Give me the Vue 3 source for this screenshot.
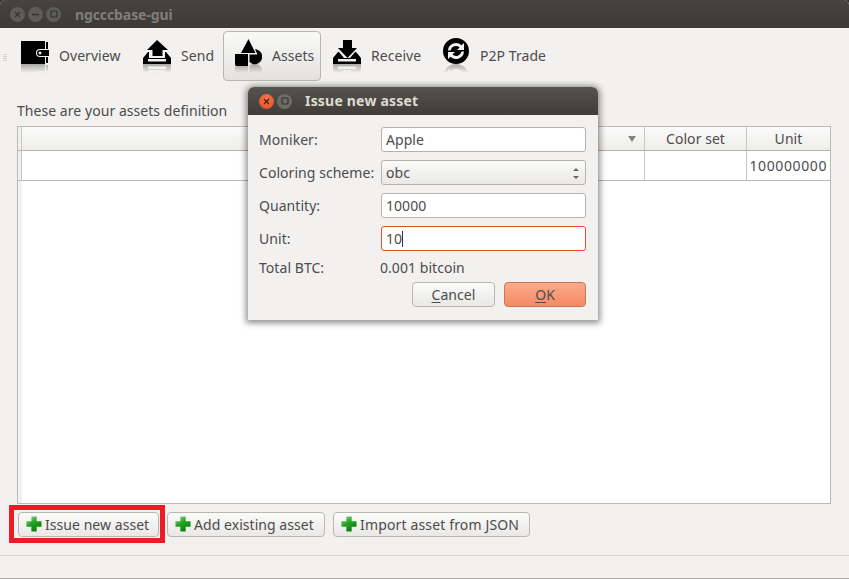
<template>
  <div class="window">
    <div class="titlebar">
      <span class="dot"><svg width="7" height="7" viewBox="0 0 7 7"><path d="M1 1l5 5M6 1L1 6" stroke="#35342f" stroke-width="1.2" /></svg></span>
      <span class="dot"><svg width="7" height="7" viewBox="0 0 7 7"><path d="M0 3.5h7" stroke="#35342f" stroke-width="1.4" /></svg></span>
      <span class="dot"><svg width="8" height="8" viewBox="0 0 8 8"><rect x="1" y="1" width="6" height="6" rx="1" fill="none" stroke="#35342f" stroke-width="1.2" /></svg></span>
      <span class="app-title">ngcccbase-gui</span>
    </div>

    <div class="toolbar">
      <div class="grip"><i></i><i></i><i></i><i></i></div>
      <div
        v-for="tool in tools"
        :key="tool.id"
        class="tool"
        :class="{ active: tool.active }"
        :style="{ width: tool.width + 'px' }"
      >
        <svg class="tool-icon" width="28" height="36" viewBox="0 0 28 36">
          <defs>
            <linearGradient :id="'fade-' + tool.id" x1="0" y1="0" x2="0" y2="1">
              <stop offset="0" stop-color="#fff" stop-opacity="0.3" />
              <stop offset="1" stop-color="#fff" stop-opacity="0" />
            </linearGradient>
            <mask :id="'mask-' + tool.id" maskUnits="userSpaceOnUse" x="0" y="26" width="28" height="10">
              <rect x="0" y="26" width="28" height="9" :fill="'url(#fade-' + tool.id + ')'" />
            </mask>
          </defs>
          <g :mask="'url(#mask-' + tool.id + ')'">
            <path :d="tool.icon" fill-rule="evenodd" transform="matrix(1 0 0 -1 0 52)" />
          </g>
          <path :d="tool.icon" fill-rule="evenodd" />
        </svg>
        <span class="tool-label">{{ tool.label }}</span>
      </div>
    </div>

    <div class="content">
      <div class="caption">These are your assets definition</div>
      <div class="table">
        <div class="th corner"></div>
        <div class="th name"><span class="sort"></span></div>
        <div class="th">Color set</div>
        <div class="th last">Unit</div>
        <div class="td corner"></div>
        <div class="td"></div>
        <div class="td"></div>
        <div class="td last num">100000000</div>
        <div class="corner filler"></div>
        <div class="blank"></div>
      </div>
      <div class="actions">
        <div class="highlight">
          <button class="btn"><svg class="plus" width="16" height="16" viewBox="0 0 18 18"><use href="#plus-shape" /></svg>Issue new asset</button>
        </div>
        <button class="btn add"><svg class="plus" width="16" height="16" viewBox="0 0 18 18">
          <defs>
            <linearGradient id="plus-fill" x1="0" y1="0" x2="0.6" y2="1">
              <stop offset="0" stop-color="#a8dca8" />
              <stop offset="0.45" stop-color="#2aa82a" />
              <stop offset="1" stop-color="#0a7d0a" />
            </linearGradient>
          </defs>
          <path id="plus-shape" d="M6 0.5h6V6h5.5v6H12v5.5H6V12H0.5V6H6z" fill="url(#plus-fill)" />
        </svg>Add existing asset</button>
        <button class="btn json"><svg class="plus" width="16" height="16" viewBox="0 0 18 18"><use href="#plus-shape" /></svg>Import asset from JSON</button>
      </div>
    </div>
    <div class="statusbar"></div>

    <div class="dialog">
      <div class="dialog-title">
        <span class="dot close"><svg width="7" height="7" viewBox="0 0 7 7"><path d="M1 1l5 5M6 1L1 6" stroke="#4a1c0c" stroke-width="1.2" /></svg></span>
        <span class="dot max"><svg width="8" height="8" viewBox="0 0 8 8"><rect x="1" y="1" width="6" height="6" rx="1" fill="none" stroke="#33322e" stroke-width="1.2" /></svg></span>
        <span class="dialog-name">Issue new asset</span>
      </div>
      <div class="form">
        <label>Moniker:</label>
        <div class="field">Apple</div>
        <label>Coloring scheme:</label>
        <div class="field combo">
          obc
          <span class="spin"><i class="up"></i><i class="down"></i></span>
        </div>
        <label>Quantity:</label>
        <div class="field">10000</div>
        <label>Unit:</label>
        <div class="field focus">10<span class="caret"></span></div>
        <label class="total-label">Total BTC:</label>
        <div class="total">0.001 bitcoin</div>
      </div>
      <div class="dialog-buttons">
        <button class="dbtn"><u>C</u>ancel</button>
        <button class="dbtn ok"><u>O</u>K</button>
      </div>
    </div>
  </div>
</template>

<script setup>
const tools = [
  {
    id: 'overview',
    label: 'Overview',
    width: 122,
    icon: 'M0 3H24V11H19a4 4 0 0 0 0 8H24V26H0zM25 4h2v7h-2zM25 19h2v6h-2zM19 12h9v6h-9a3 3 0 0 1 0-6zM19 13.5a1.5 1.5 0 1 0 .01 0z'
  },
  {
    id: 'send',
    label: 'Send',
    width: 90,
    icon: 'M14 2L25 12H19.5V18H9.5V12H4zM5 14L0 20v6h28v-6l-5-6h-1v6H6v-6zM5 21v2.5h18V21z'
  },
  {
    id: 'assets',
    label: 'Assets',
    width: 98,
    active: true,
    icon: 'M14.5 1L21.5 15H7zM1 16h13v12H3a2 2 0 0 1-2-2zM21 11.2A7.5 7.5 0 1 1 15.5 24.1V16.5H23.5z'
  },
  {
    id: 'receive',
    label: 'Receive',
    width: 109,
    icon: 'M10 2h9v8h5L14.5 20 5 10h5zM5 14L0 20v6h28v-6l-5-6h-1l-5 6H11L6 14zM5 21v2.5h18V21z'
  },
  {
    id: 'trade',
    label: 'P2P Trade',
    width: 120,
    icon: 'M14 0a13 13 0 1 1 0 26a13 13 0 0 1 0-26zM6 12.5A8 8 0 0 1 19.5 7.2L22 5V12H15L17.6 9.4A5.5 5.5 0 0 0 8.5 12.5zM22 13.5A8 8 0 0 1 8.5 18.8L6 21V14H13L10.4 16.6A5.5 5.5 0 0 0 19.5 13.5z'
  }
]
</script>

<style>
html, body {
  margin: 0;
  background: #2f2e2a;
}
</style>

<style scoped>
.window {
  position: relative;
  width: 849px;
  height: 579px;
  display: flex;
  flex-direction: column;
  overflow: hidden;
  background: #f2f1f0;
  border-radius: 5px 5px 0 0;
  font-family: "Noto Sans", "Open Sans", sans-serif;
  font-size: 14px;
  letter-spacing: 0.05px;
  color: #4c4c4c;
  box-sizing: border-box;
  border-bottom: 1px solid #aeaca9;
}
.titlebar {
  height: 28px;
  flex: none;
  display: flex;
  align-items: center;
  padding-left: 10px;
  gap: 3px;
  box-sizing: border-box;
  background: linear-gradient(#45443f, #3b3a36);
}
.dot {
  width: 15px;
  height: 15px;
  border-radius: 50%;
  background: #5d5c57;
  display: flex;
  align-items: center;
  justify-content: center;
}
.app-title {
  margin-left: 11px;
  font-weight: 700;
  font-size: 14px;
  letter-spacing: -0.1px;
  color: #7f7e77;
}
.toolbar {
  height: 60px;
  flex: none;
  display: flex;
  align-items: flex-start;
  padding: 3px 0 0 11px;
  box-sizing: border-box;
  position: relative;
}
.grip {
  position: absolute;
  left: 3px;
  top: 26px;
  display: flex;
  flex-direction: column;
  gap: 1px;
}
.grip i {
  display: block;
  width: 4px;
  height: 1px;
  background: #cfcdc9;
}
.tool {
  height: 50px;
  display: flex;
  align-items: center;
  gap: 10px;
  padding-left: 9px;
  box-sizing: border-box;
  flex: none;
  border: 1px solid transparent;
  border-radius: 4px;
}
.tool.active {
  padding-left: 10px;
  border-color: #b9b7b3;
  background: linear-gradient(#f9f9f8, #e4e2e0);
  margin-right: 2px;
}
.tool-label {
  margin-top: -2px;
}
.tool-icon {
  align-self: flex-start;
  flex: none;
  margin-top: 6px;
}
.content {
  flex: 1;
  min-height: 0;
  display: flex;
  flex-direction: column;
  padding: 0 18px 0 17px;
}
.caption {
  height: 38px;
  flex: none;
  line-height: 46px;
}
.table {
  flex: 1;
  min-height: 0;
  display: grid;
  grid-template-columns: 4px 1fr 102px 83px;
  grid-template-rows: 24px 30px 1fr;
  border: 1px solid #bcbab6;
  background: #fff;
}
.th {
  display: flex;
  align-items: center;
  justify-content: center;
  position: relative;
  background: linear-gradient(#fbfbfb, #eeedeb);
  border-right: 1px solid #c8c6c2;
  border-bottom: 1px solid #b3b1ad;
}
.td {
  border-right: 1px solid #c8c6c2;
  border-bottom: 1px solid #bcbab6;
}
.corner {
  background: #f2f1f0;
}
.last {
  border-right: 0;
}
.num {
  display: flex;
  align-items: center;
  justify-content: flex-end;
  padding-right: 3px;
  letter-spacing: 0.6px;
}
.sort {
  position: absolute;
  right: 8px;
  top: 9px;
  border-style: solid;
  border-width: 6px 4px 0;
  border-color: #85837f transparent transparent;
}
.filler {
  grid-column: 1;
}
.blank {
  grid-column: 2 / 5;
}
.actions {
  flex: none;
  display: flex;
  align-items: center;
  margin-top: 1px;
  margin-left: -8px;
  height: 38px;
}
.highlight {
  border: 5px solid #ed1c24;
  padding-left: 4px;
  display: flex;
  align-items: center;
  margin-right: 2px;
  box-sizing: border-box;
  height: 38px;
  width: 156px;
}
.btn {
  height: 25px;
  padding: 0 0 0 7px;
  display: flex;
  align-items: center;
  font: inherit;
  letter-spacing: inherit;
  color: inherit;
  background: linear-gradient(#fbfbfa, #e9e8e6);
  border: 1px solid #b9b7b3;
  border-radius: 4px;
  box-sizing: border-box;
  width: 141px;
}
.add {
  width: 158px;
  margin-right: 8px;
}
.json {
  width: 197px;
  letter-spacing: 0.15px;
}
.plus {
  flex: none;
  margin-right: 3px;
}
.statusbar {
  flex: none;
  height: 22px;
  margin-top: 12px;
  border-top: 1px solid #dcdad7;
}
.dialog {
  position: absolute;
  left: 248px;
  top: 87px;
  width: 350px;
  height: 233px;
  background: #f2f1f0;
  border-radius: 6px 6px 0 0;
  box-shadow: 0 1px 6px 2px rgba(0, 0, 0, 0.45);
  display: flex;
  flex-direction: column;
}
.dialog-title {
  height: 28px;
  flex: none;
  display: flex;
  align-items: center;
  padding-left: 11px;
  gap: 3px;
  border-radius: 6px 6px 0 0;
  background: linear-gradient(#54534d, #3e3d39);
}
.dot.close {
  background: radial-gradient(circle at 50% 35%, #f37a4e, #e2491d);
}
.dot.max {
  background: #6d6c67;
}
.dialog-name {
  margin-left: 10px;
  margin-top: -2px;
  font-weight: 700;
  font-size: 14px;
  letter-spacing: 0.2px;
  color: #dfdbd2;
}
.form {
  display: grid;
  grid-template-columns: 122px 205px;
  grid-auto-rows: 25px;
  row-gap: 8px;
  align-items: center;
  padding: 12px 0 0 11px;
}
.field {
  height: 25px;
  line-height: 23px;
  padding-left: 4px;
  box-sizing: border-box;
  border: 1px solid #b5b3af;
  border-radius: 3px;
  background: #fff;
  position: relative;
}
.combo {
  background: linear-gradient(#fbfbfa, #e9e8e6);
}
.spin {
  position: absolute;
  right: 6px;
  top: 7px;
  display: flex;
  flex-direction: column;
  gap: 5px;
}
.spin i {
  display: block;
  border-style: solid;
  border-color: transparent;
}
.spin .up {
  border-width: 0 3px 3px;
  border-bottom-color: #6b6965;
}
.spin .down {
  border-width: 3px 3px 0;
  border-top-color: #6b6965;
}
.focus {
  border-color: #e0522a;
}
.caret {
  display: inline-block;
  width: 1px;
  height: 16px;
  background: #333;
  vertical-align: -3px;
}
.total,
.total-label {
  margin-top: -9px;
}
.total {
  margin-left: -1px;
}
.dialog-buttons {
  position: absolute;
  right: 12px;
  bottom: 13px;
  display: flex;
  gap: 9px;
}
.dbtn {
  width: 83px;
  height: 25px;
  padding: 0;
  font: inherit;
  letter-spacing: inherit;
  color: inherit;
  background: linear-gradient(#fbfbfa, #e9e8e6);
  border: 1px solid #b9b7b3;
  border-radius: 4px;
}
.dbtn u {
  text-underline-offset: 2px;
}
.dbtn.ok {
  width: 82px;
  border-color: #c9765a;
  background: linear-gradient(#fbab8a, #f58a63);
}
</style>
